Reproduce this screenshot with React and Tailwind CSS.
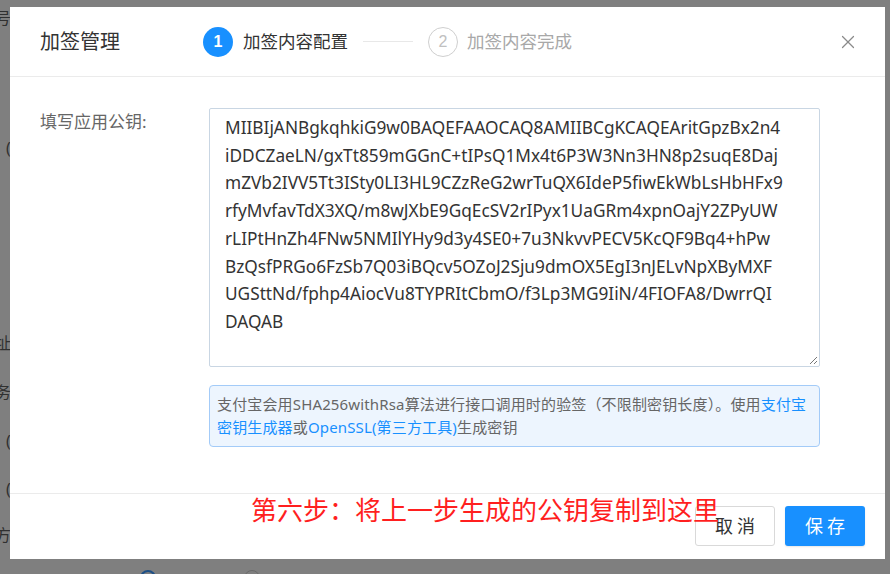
import React from 'react';
import { X } from 'lucide-react';

const keyLines = [
  'MIIBIjANBgkqhkiG9w0BAQEFAAOCAQ8AMIIBCgKCAQEAritGpzBx2n4',
  'iDDCZaeLN/gxTt859mGGnC+tIPsQ1Mx4t6P3W3Nn3HN8p2suqE8Daj',
  'mZVb2IVV5Tt3ISty0LI3HL9CZzReG2wrTuQX6IdeP5fiwEkWbLsHbHFx9',
  'rfyMvfavTdX3XQ/m8wJXbE9GqEcSV2rIPyx1UaGRm4xpnOajY2ZPyUW',
  'rLIPtHnZh4FNw5NMIlYHy9d3y4SE0+7u3NkvvPECV5KcQF9Bq4+hPw',
  'BzQsfPRGo6FzSb7Q03iBQcv5OZoJ2Sju9dmOX5EgI3nJELvNpXByMXF',
  'UGSttNd/fphp4AiocVu8TYPRItCbmO/f3Lp3MG9IiN/4FIOFA8/DwrrQI',
  'DAQAB',
];

const cjk = "font-['Noto_Sans','Noto_Sans_CJK_SC',sans-serif]";

export default function App() {
  return (
    <div className={`relative w-[890px] h-[574px] overflow-hidden bg-[#7f7f7f] ${cjk}`}>
      {/* page behind the mask */}
      <div className="flex flex-col text-[16px] text-[#303030] leading-none -ml-[5px]">
        <div className="h-[25px] pt-[10px]">号</div>
        <div className="h-[125px] pt-[115px] pl-[11px]">(</div>
        <div className="h-[195px] pt-[185px]">址</div>
        <div className="h-[50px] pt-[39px]">务</div>
        <div className="h-[48px] pt-[38px] pl-[11px]">(</div>
        <div className="h-[48px] pt-[38px] pl-[11px]">(</div>
        <div className="h-[48px] pt-[36px]">方</div>
        <div className="flex gap-[88px] pl-[145px] pt-[31px]">
          <span className="w-[16px] h-[16px] rounded-full border-2 border-[#1d4f86]" />
          <span className="w-[16px] h-[16px] rounded-full border border-[#6a6a6a]" />
        </div>
      </div>

      {/* modal */}
      <div className="absolute left-[10px] top-[7px] w-[875px] h-[552px] bg-white flex flex-col">
        <div className="h-[70px] shrink-0 flex items-center border-b border-[#ebebeb] pl-[30px] pr-[26px]">
          <div className="text-[20px] text-[#333] w-[163px]">加签管理</div>
          <div className="flex items-center">
            <span className="w-[30px] h-[30px] rounded-full bg-[#1890ff] text-white text-[16px] flex items-center justify-center font-['Liberation_Sans',sans-serif] font-bold">1</span>
            <span className="ml-[10px] text-[17.5px] text-[#333]">加签内容配置</span>
            <span className="ml-[15px] w-[50px] h-px bg-[#e8e8e8]" />
            <span className="ml-[15px] w-[30px] h-[30px] rounded-full border border-[#cfcfcf] text-[#c0c0c0] text-[16px] flex items-center justify-center font-['Liberation_Sans',sans-serif]">2</span>
            <span className="ml-[9px] text-[17.5px] text-[#a8a8a8]">加签内容完成</span>
          </div>
          <X className="ml-auto w-[22px] h-[22px] text-[#8a8a8a]" strokeWidth={1.3} />
        </div>

        <div className="flex-1 flex pt-[31px] pl-[30px]">
          <div className="w-[169px] text-[17px] text-[#666] leading-[30px] -mt-[1px]">填写应用公钥:</div>
          <div className="w-[611px] flex flex-col">
            <div className="relative h-[259px] border border-[#c9d6e3] rounded-[2px] pl-[15px] pt-[5px] text-[17.25px] leading-[27.7px] text-[#333] font-['Noto_Sans',sans-serif]">
              {keyLines.map((l) => (
                <div key={l} className="whitespace-nowrap">{l}</div>
              ))}
              <svg className="absolute right-[1px] bottom-[1px]" width="10" height="10" viewBox="0 0 10 10">
                <path d="M9 2 L2 9 M9 6 L6 9" stroke="#777" strokeWidth="1" />
              </svg>
            </div>
            <div className="mt-[18px] h-[62px] rounded-[4px] border border-[#a3cbf8] bg-[#edf5fe] px-[7px] pt-[7px] text-[15px] leading-[23px] tracking-[0.15px] text-[#666]">
              支付宝会用SHA256withRsa算法进行接口调用时的验签（不限制密钥长度）。使用<span className="text-[#1890ff]">支付宝密钥生成器</span>或<span className="text-[#1890ff]">OpenSSL(第三方工具)</span>生成密钥
            </div>
          </div>
        </div>

        <div className="relative h-[66px] shrink-0 border-t border-[#ebebeb] flex items-start justify-end gap-[10px] pt-[12px] pr-[20px]">
          <span className="absolute left-[241px] top-[-2px] text-[26px] leading-[36px] text-[#ff1f1f] whitespace-nowrap">第六步：将上一步生成的公钥复制到这里</span>
          <button className="w-[80px] h-[40px] rounded-[3px] border border-[#d9d9d9] bg-white text-[18px] text-[#333] tracking-[4px] pl-[4px]">取消</button>
          <button className="w-[80px] h-[40px] rounded-[3px] bg-[#1890ff] text-[18px] text-white tracking-[4px] pl-[4px] shadow-[0_1px_2px_rgba(0,0,0,0.1)]">保存</button>
        </div>
      </div>
    </div>
  );
}
